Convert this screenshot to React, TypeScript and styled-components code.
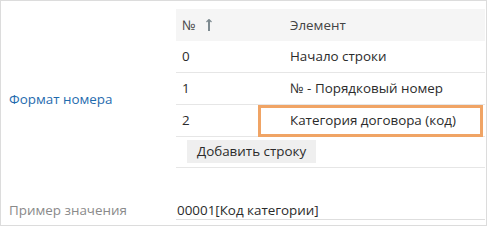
import React from 'react';
import styled, {createGlobalStyle} from 'styled-components';

const Global = createGlobalStyle`
    html, body {
        margin: 0;
        padding: 0;
        background: #fff;
    }
    body {
        font-family: "Open Sans", "Liberation Sans", sans-serif;
        font-size: 13.4px;
        color: #2b2b2b;
    }
`

const Frame = styled.div`
    box-sizing: border-box;
    width: 487px;
    height: 226px;
    border: 1px solid #dcdcdc;
    display: grid;
    grid-template-columns: 175px 1fr;
    grid-template-rows: auto auto;
    align-content: start;
`

const Label = styled.div<{muted?: boolean}>`
    padding-left: 8px;
    align-self: ${p => p.muted ? 'start' : 'center'};
    padding-top: ${p => p.muted ? '10px' : '6px'};
    line-height: 17px;
    color: ${p => p.muted ? '#8a8a8a' : '#1f6bae'};
`

const TableWrap = styled.div`
    padding-top: 8px;
    padding-bottom: 24px;
    padding-right: 1px;
`

const Row = styled.div<{head?: boolean}>`
    position: relative;
    box-sizing: border-box;
    height: 32px;
    display: grid;
    grid-template-columns: 108px 1fr;
    align-items: center;
    background: ${p => p.head ? '#f5f5f5' : 'transparent'};
    border-bottom: ${p => p.head ? 'none' : '1px solid #e6e6e6'};
`

const Cell = styled.div`
    padding-left: 6px;
    display: flex;
    align-items: center;
    gap: 10px;
    line-height: 17px;
    white-space: nowrap;
`

const HeadCell = styled(Cell)`
    color: #444;
`

const Highlight = styled.div`
    position: absolute;
    left: 82px;
    right: 2px;
    top: 0;
    bottom: -1px;
    border: 3px solid #f0a465;
    pointer-events: none;
`

const ButtonRow = styled.div`
    box-sizing: border-box;
    height: 31px;
    border-bottom: 1px solid #e6e6e6;
    padding-left: 11px;
    padding-top: 3px;
`

const AddButton = styled.button`
    height: 23px;
    padding: 0 10px;
    border: none;
    background: #efefef;
    font-family: inherit;
    font-size: 13.4px;
    color: #2b2b2b;
    line-height: 23px;
`

const Value = styled.div`
    box-sizing: border-box;
    height: 28px;
    padding-top: 10px;
    padding-left: 1px;
    margin-right: 1px;
    line-height: 17px;
    border-bottom: 1px solid #dedede;
`

const SortArrow = () => (
    <svg width="6" height="12" viewBox="0 0 6 12">
        <path d="M3 1 V12" stroke="#7d8a90" strokeWidth="2" fill="none" />
        <path d="M0.5 3 L3 0.5 L5.5 3" stroke="#7d8a90" strokeWidth="1.2" fill="none" />
    </svg>
)

const rows = [
    {n: '0', name: 'Начало строки'},
    {n: '1', name: '№ - Порядковый номер'},
    {n: '2', name: 'Категория договора (код)', marked: true},
]

const App: React.FC = () => {
    return (
        <>
            <Global />
            <Frame>
                <Label>Формат номера</Label>
                <TableWrap>
                    <Row head>
                        <HeadCell>№ <SortArrow /></HeadCell>
                        <HeadCell>Элемент</HeadCell>
                    </Row>
                    {rows.map(r => (
                        <Row key={r.n}>
                            <Cell>{r.n}</Cell>
                            <Cell>{r.name}</Cell>
                            {r.marked && <Highlight />}
                        </Row>
                    ))}
                    <ButtonRow>
                        <AddButton>Добавить строку</AddButton>
                    </ButtonRow>
                </TableWrap>
                <Label muted>Пример значения</Label>
                <Value>00001[Код категории]</Value>
            </Frame>
        </>
    )
}

export default App;
